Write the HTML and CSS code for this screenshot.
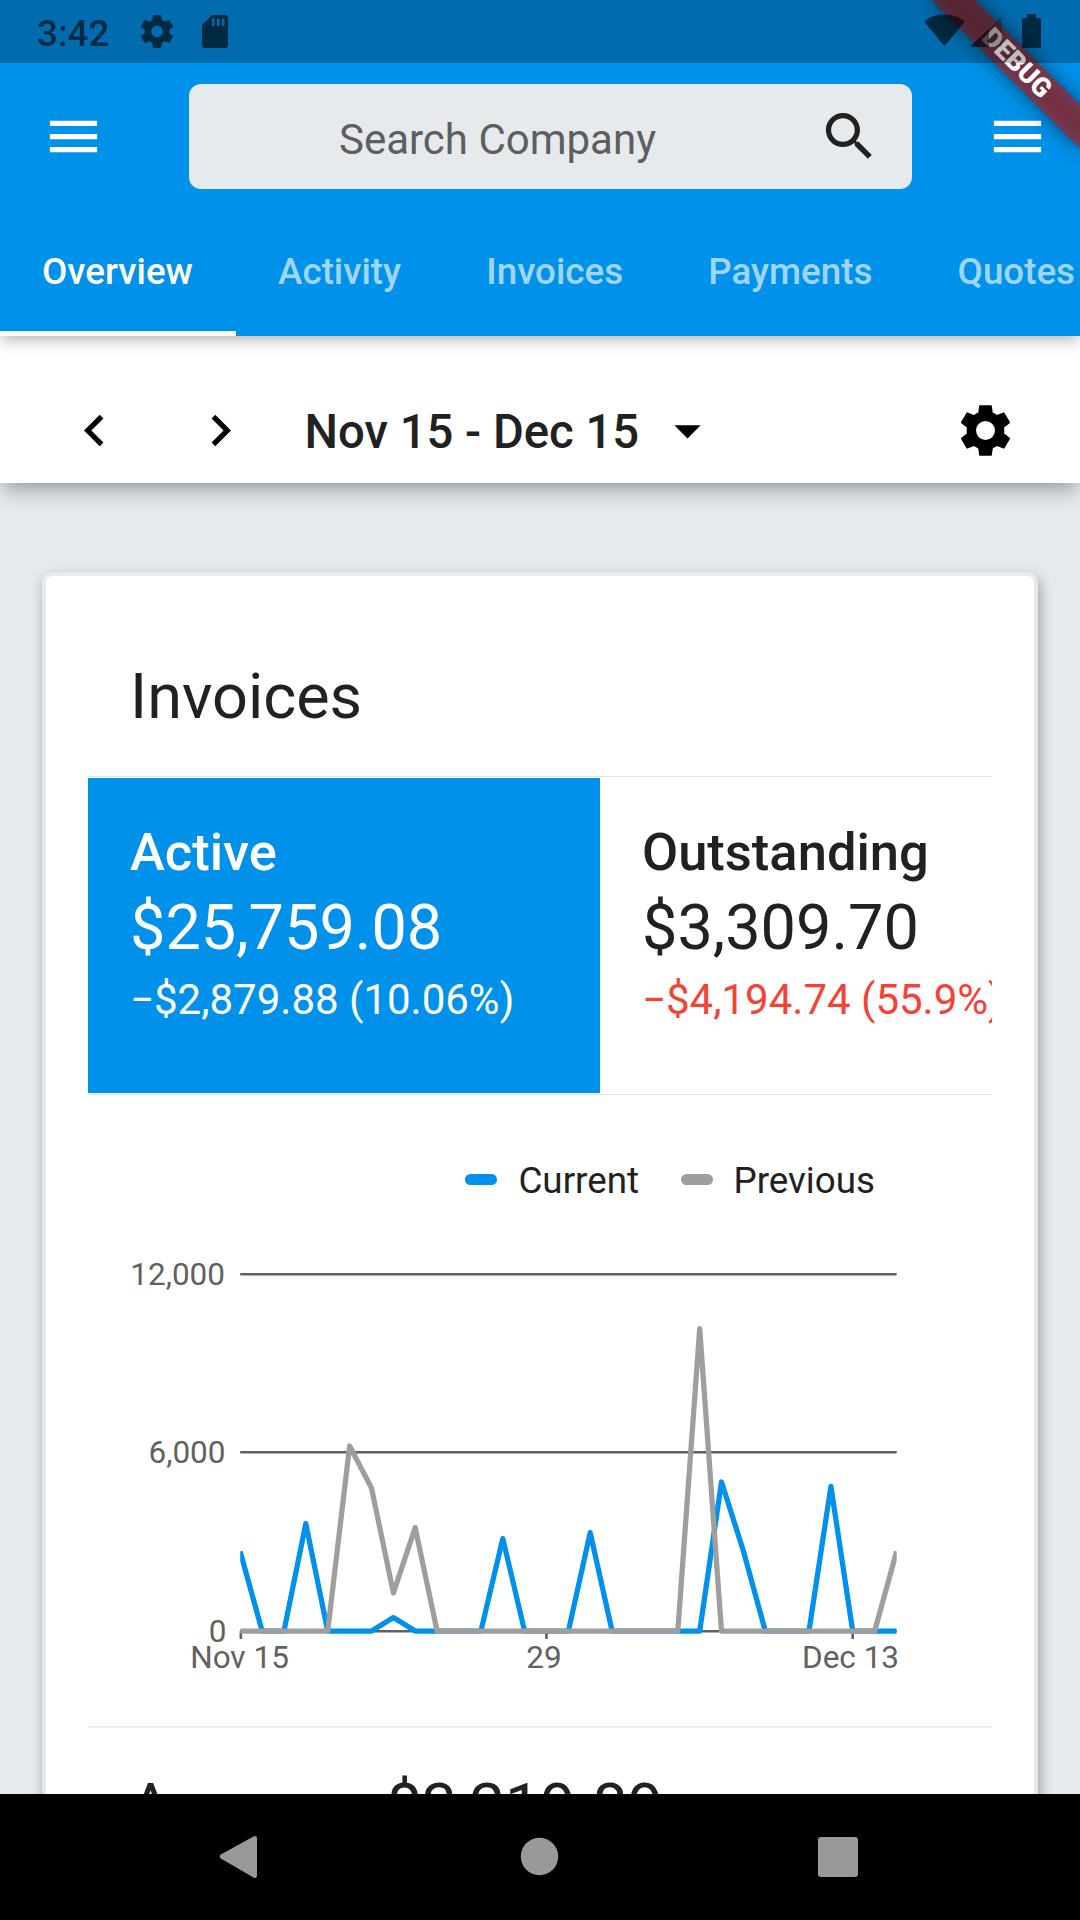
FILE: index.html
```html
<!DOCTYPE html>
<html lang="en">
<head>
<meta charset="utf-8">
<title>Dashboard</title>
<link rel="stylesheet" href="styles.css">
</head>
<body>
<div class="screen">
  <header class="appbar">
    <div class="toolbar">
      <svg class="icon" viewBox="0 0 24 24"><path fill="#fff" d="M3 18h18v-2H3v2zm0-5h18v-2H3v2zm0-7v2h18V6H3z"/></svg>
      <div class="search">
        <span class="search-label">Search Company</span>
        <svg class="icon" viewBox="0 0 24 24"><path fill="#212121" d="M15.5 14h-.79l-.28-.27C15.41 12.59 16 11.11 16 9.5 16 5.91 13.09 3 9.5 3S3 5.91 3 9.5 5.91 16 9.5 16c1.61 0 3.09-.59 4.23-1.57l.27.28v.79l5 4.99L20.49 19l-4.99-5zm-6 0C7.01 14 5 11.99 5 9.5S7.01 5 9.5 5 14 7.01 14 9.5 11.99 14 9.5 14z"/></svg>
      </div>
      <svg class="icon" viewBox="0 0 24 24"><path fill="#fff" d="M3 18h18v-2H3v2zm0-5h18v-2H3v2zm0-7v2h18V6H3z"/></svg>
    </div>
    <nav class="tabs">
      <span class="tab tab-active">Overview</span>
      <span class="tab">Activity</span>
      <span class="tab">Invoices</span>
      <span class="tab">Payments</span>
      <span class="tab">Quotes</span>
    </nav>
  </header>

  <div class="rangebar">
    <svg class="icon" viewBox="0 0 24 24"><path d="M15.41 7.41L14 6l-6 6 6 6 1.41-1.41L10.83 12z"/></svg>
    <svg class="icon next" viewBox="0 0 24 24"><path d="M10 6L8.59 7.41 13.17 12l-4.58 4.59L10 18l6-6z"/></svg>
    <span class="range">Nov 15 - Dec 15</span>
    <svg class="icon caret" viewBox="0 0 24 24"><path d="M7 10l5 5 5-5z"/></svg>
    <svg class="icon gear" viewBox="0 0 24 24"><path d="M9.900 2.350H14.100Q14.350 2.350 14.400 2.600L14.750 5.150Q15.600 5.500 16.350 6.050L18.850 5.100Q19.100 5.050 19.200 5.250L21.300 8.800Q21.400 9.050 21.200 9.200L19.100 10.850Q19.250 12 19.100 13.150L21.200 14.800Q21.400 14.950 21.300 15.200L19.200 18.750Q19.100 18.950 18.850 18.900L16.350 17.950Q15.600 18.500 14.750 18.850L14.400 21.400Q14.350 21.650 14.100 21.650H9.900Q9.650 21.650 9.600 21.400L9.250 18.850Q8.400 18.500 7.650 17.950L5.150 18.900Q4.900 18.950 4.800 18.750L2.700 15.200Q2.600 14.950 2.800 14.800L4.900 13.150Q4.750 12 4.900 10.850L2.800 9.200Q2.600 9.050 2.700 8.800L4.800 5.250Q4.900 5.050 5.150 5.100L7.650 6.050Q8.400 5.500 9.250 5.150L9.600 2.600Q9.650 2.350 9.900 2.350zM12 8.400a3.600 3.600 0 1 0 0 7.200 3.600 3.600 0 0 0 0-7.200z" fill-rule="evenodd"/></svg>
  </div>

  <main class="content">
    <section class="card">
      <h2 class="card-title">Invoices</h2>
      <div class="totals">
        <div class="total total-active">
          <div class="total-name">Active</div>
          <div class="total-value">$25,759.08</div>
          <div class="total-change">−$2,879.88 (10.06%)</div>
        </div>
        <div class="total">
          <div class="total-name">Outstanding</div>
          <div class="total-value">$3,309.70</div>
          <div class="total-change negative">−$4,194.74 (55.9%)</div>
        </div>
      </div>
      <div class="legend">
        <span class="swatch current"></span><span class="legend-label">Current</span>
        <span class="swatch previous"></span><span class="legend-label">Previous</span>
      </div>
      <svg class="chart" viewBox="88 1220 904 506">
        <defs><clipPath id="plot"><rect x="240.2" y="1260" width="656.5" height="380"/></clipPath></defs>
        <g class="grid">
          <path d="M240.2 1274.2H896.7M240.2 1452.3H896.7M240.2 1631.3H896.7"/>
          <path d="M240.9 1631V1639M546.4 1631V1639M852.7 1631V1639"/>
        </g>
        <g clip-path="url(#plot)">
          <polyline class="line line-current" points="240.2,1551.500 262.1,1631 284,1631 305.8,1523.6 327.7,1631 349.6,1631 371.5,1631 393.4,1617.6 415.2,1631 437.1,1631 459,1631 480.9,1631 502.8,1538.6 524.6,1631 546.5,1631 568.4,1631 590.2,1532.6 612.1,1631 634,1631 655.9,1631 677.8,1631 699.7,1631 721.5,1482 743.4,1551 765.3,1631 787.2,1631 809,1631 830.9,1486.3 852.7,1631 874.7,1631 896.6,1631"/>
          <polyline class="line line-previous" points="240.2,1631 327.7,1631 349.6,1446 371.5,1488 393.4,1593 415.2,1527.6 437.1,1631 677.8,1631 699.7,1328.6 721.5,1631 874.7,1631 896.6,1551.500"/>
        </g>
        <g class="axis">
          <text x="225" y="1285" text-anchor="end">12,000</text>
          <text x="225.5" y="1463" text-anchor="end">6,000</text>
          <text x="226.5" y="1642" text-anchor="end">0</text>
          <text x="239.5" y="1668" text-anchor="middle">Nov 15</text>
          <text x="544" y="1668" text-anchor="middle">29</text>
          <text x="850.5" y="1668" text-anchor="middle">Dec 13</text>
        </g>
      </svg>
      <div class="average"><span>Average</span><span>$3,219.89</span></div>
    </section>
  </main>

  <footer class="navbar">
    <svg viewBox="0 0 1080 126"><g fill="#999"><path d="M220.8 60.5L253.5 42.6Q257 40.8 257 44.5V81.5Q257 85.2 253.5 83.4L220.8 64.5Q218.5 62.5 220.8 60.5z"/><circle cx="539.5" cy="62.5" r="18.7"/><rect x="818" y="43" width="40" height="40" rx="3"/></g></svg>
  </footer>

  <div class="debug"><div class="debug-shadow"></div><div class="debug-band">DEBUG</div></div>

  <div class="statusbar">
    <span class="clock">3:42</span>
    <svg class="status-icons" viewBox="109 0 971 63">
      <g fill="#000" fill-opacity=".62">
        <path transform="translate(137.2 11.7) scale(1.65)" d="M19.43 12.98c.04-.32.07-.64.07-.98s-.03-.66-.07-.98l2.11-1.65c.19-.15.24-.42.12-.64l-2-3.46c-.12-.22-.39-.3-.61-.22l-2.49 1c-.52-.4-1.08-.73-1.69-.98l-.38-2.65C14.46 2.18 14.25 2 14 2h-4c-.25 0-.46.18-.49.42l-.38 2.65c-.61.25-1.17.59-1.69.98l-2.49-1c-.23-.09-.49 0-.61.22l-2 3.46c-.13.22-.07.49.12.64l2.11 1.65c-.04.32-.07.65-.07.98s.03.66.07.98l-2.11 1.65c-.19.15-.24.42-.12.64l2 3.46c.12.22.39.3.61.22l2.49-1c.52.4 1.08.73 1.69.98l.38 2.65c.03.24.24.42.49.42h4c.25 0 .46-.18.49-.42l.38-2.65c.61-.25 1.17-.59 1.69-.98l2.49 1c.23.09.49 0 .61-.22l2-3.46c.12-.22.07-.49-.12-.64l-2.11-1.65zM12 15.5c-1.93 0-3.5-1.57-3.5-3.5s1.57-3.5 3.5-3.5 3.5 1.57 3.5 3.5-1.57 3.5-3.5 3.5z"/>
        <path fill-rule="evenodd" d="M212 15H225Q228 15 228 18V45Q228 48 225 48H205Q202 48 202 45V25zM212 18.5V26H214.5V18.5zM217 18.5V26H219.5V18.5zM222 18.5V26H224.5V18.5z"/>
        <path d="M925.5 20.3Q933 14.6 944.5 14.6T963.5 20.3Q965 21.3 963.7 23L946 44.5Q944.5 46 943 44.5L925.3 23Q924 21.3 925.5 20.3z"/>
        <path d="M989 29V47H972.5Q970 46.5 971.5 44.8z"/>
        <path fill-opacity=".25" d="M989 29L1000 17.5Q1002 16 1002 18V45Q1002 47 1000 47H989z"/>
        <path d="M1027 14H1036V18H1039.5Q1041 18 1041 19.5V46.5Q1041 48 1039.5 48H1023.5Q1022 48 1022 46.5V19.5Q1022 18 1023.5 18H1027z"/>
      </g>
    </svg>
  </div>
</div>
</body>
</html>
```
FILE: styles.css
```css
* { box-sizing: border-box; }

body {
  margin: 0;
  font-family: Roboto, "Liberation Sans", sans-serif;
  color: #212121;
}

.screen {
  position: relative;
  display: flex;
  flex-direction: column;
  width: 1080px;
  height: 1920px;
  overflow: hidden;
  background: #e6eaed;
}

.icon { flex: none; width: 63px; height: 63px; display: block; }

/* App bar */
.appbar {
  flex: none;
  z-index: 3;
  height: 336px;
  padding-top: 63px;
  background: #0091ea;
  box-shadow: 0 6px 14px -2px rgba(0, 0, 0, .3);
}

.toolbar {
  display: flex;
  align-items: center;
  justify-content: space-between;
  height: 147px;
  padding: 0 31px 0 42px;
}

.search {
  display: flex;
  align-items: center;
  width: 723px;
  height: 105px;
  margin-left: 10px;
  padding-right: 31px;
  border-radius: 12px;
  background: #e6eaed;
}

.search-label {
  flex: 1;
  padding: 5px 12px 0 0;
  text-align: center;
  font-size: 42px;
  color: #5c5e5f;
}

.tabs { display: flex; height: 126px; }

.tab {
  flex: none;
  padding: 0 43.2px 0 42px;
  line-height: 123px;
  font-size: 36.75px;
  font-weight: 500;
  color: rgba(255, 255, 255, .65);
}

.tab-active { color: #fff; border-bottom: 5px solid #fff; }

/* Date range */
.rangebar {
  flex: none;
  z-index: 2;
  display: flex;
  align-items: center;
  height: 147px;
  padding: 42px 63px 0;
  background: #fff;
  box-shadow: 0 8px 21px -3px rgba(0, 0, 0, .38);
}

.next { margin-left: 63px; }
.range { margin-left: 52.5px; padding-top: 2px; font-size: 47.25px; font-weight: 500; }
.caret { margin-left: 17px; }
.gear { margin-left: auto; }

/* Invoices card */
.content { flex: 1; min-height: 0; padding: 89px 42px 0; overflow: hidden; }

.card {
  height: 1400px;
  padding: 0 42px;
  border: 4px solid #e6eaed;
  border-radius: 10px;
  background: #fff;
  box-shadow: 2px 5px 13px rgba(0, 0, 0, .32);
}

.card-title {
  height: 200px;
  margin: 0;
  padding: 84px 42px 0;
  font-size: 63px;
  font-weight: 400;
}

.totals {
  display: flex;
  height: 319px;
  padding: 1px 0;
  border-top: 1px solid #e4e4e4;
  border-bottom: 1px solid #e4e4e4;
  overflow: hidden;
}

.total { flex: none; padding: 42px; white-space: nowrap; }
.total-active { width: 512px; background: #0091ea; color: #fff; }
.total-name { font-size: 52.5px; font-weight: 500; line-height: 64px; }
.total-value { font-size: 63px; line-height: 87px; }
.total-change { font-size: 42px; line-height: 57px; }
.negative { color: #f44336; }

.legend {
  display: flex;
  align-items: center;
  justify-content: flex-end;
  height: 125px;
  padding: 45px 117px 0 0;
  font-size: 36.75px;
}

.swatch { width: 32px; height: 11px; margin: 0 21px 2px 0; border-radius: 5.5px; }
.current { background: #0091ea; }
.previous { margin-left: 41.5px; background: #9e9e9e; }

.chart { display: block; width: 904px; height: 506px; }
.grid { fill: none; stroke: #616161; stroke-width: 2.6; }
.line { fill: none; stroke-width: 5.25; stroke-linejoin: round; stroke-linecap: butt; }
.line-current { stroke: #0091ea; }
.line-previous { stroke: #9e9e9e; }
.axis { font-size: 31.5px; fill: #616161; }

.average {
  display: flex;
  gap: 30px;
  padding: 42px;
  border-top: 2px solid #eee;
  font-size: 63px;
}

/* System navigation */
.navbar { flex: none; z-index: 2; height: 126px; background: #000; }
.navbar svg { display: block; width: 1080px; height: 126px; }

/* Corner banner, rotated about the top right corner */
.debug {
  position: absolute;
  z-index: 4;
  left: 1080px;
  top: 0;
  transform-origin: 0 0;
  transform: rotate(45deg);
}

.debug-shadow, .debug-band {
  position: absolute;
  left: -105px;
  top: 73.5px;
  width: 210px;
  height: 31.5px;
}

.debug-shadow { background: rgba(0, 0, 0, .5); filter: blur(10px); }

.debug-band {
  background: rgba(183, 28, 28, .627);
  color: #fff;
  font-size: 26.8px;
  font-weight: 900;
  line-height: 31.5px;
  text-align: center;
}

/* System status bar lies over the app bar */
.statusbar {
  position: absolute;
  z-index: 5;
  inset: 0 0 auto 0;
  display: flex;
  height: 63px;
  background: rgba(0, 0, 0, .25);
}

.clock {
  width: 109px;
  padding-left: 37px;
  line-height: 67px;
  font-size: 36.75px;
  font-weight: 500;
  color: rgba(0, 0, 0, .62);
}

.status-icons { width: 971px; height: 63px; }
```
